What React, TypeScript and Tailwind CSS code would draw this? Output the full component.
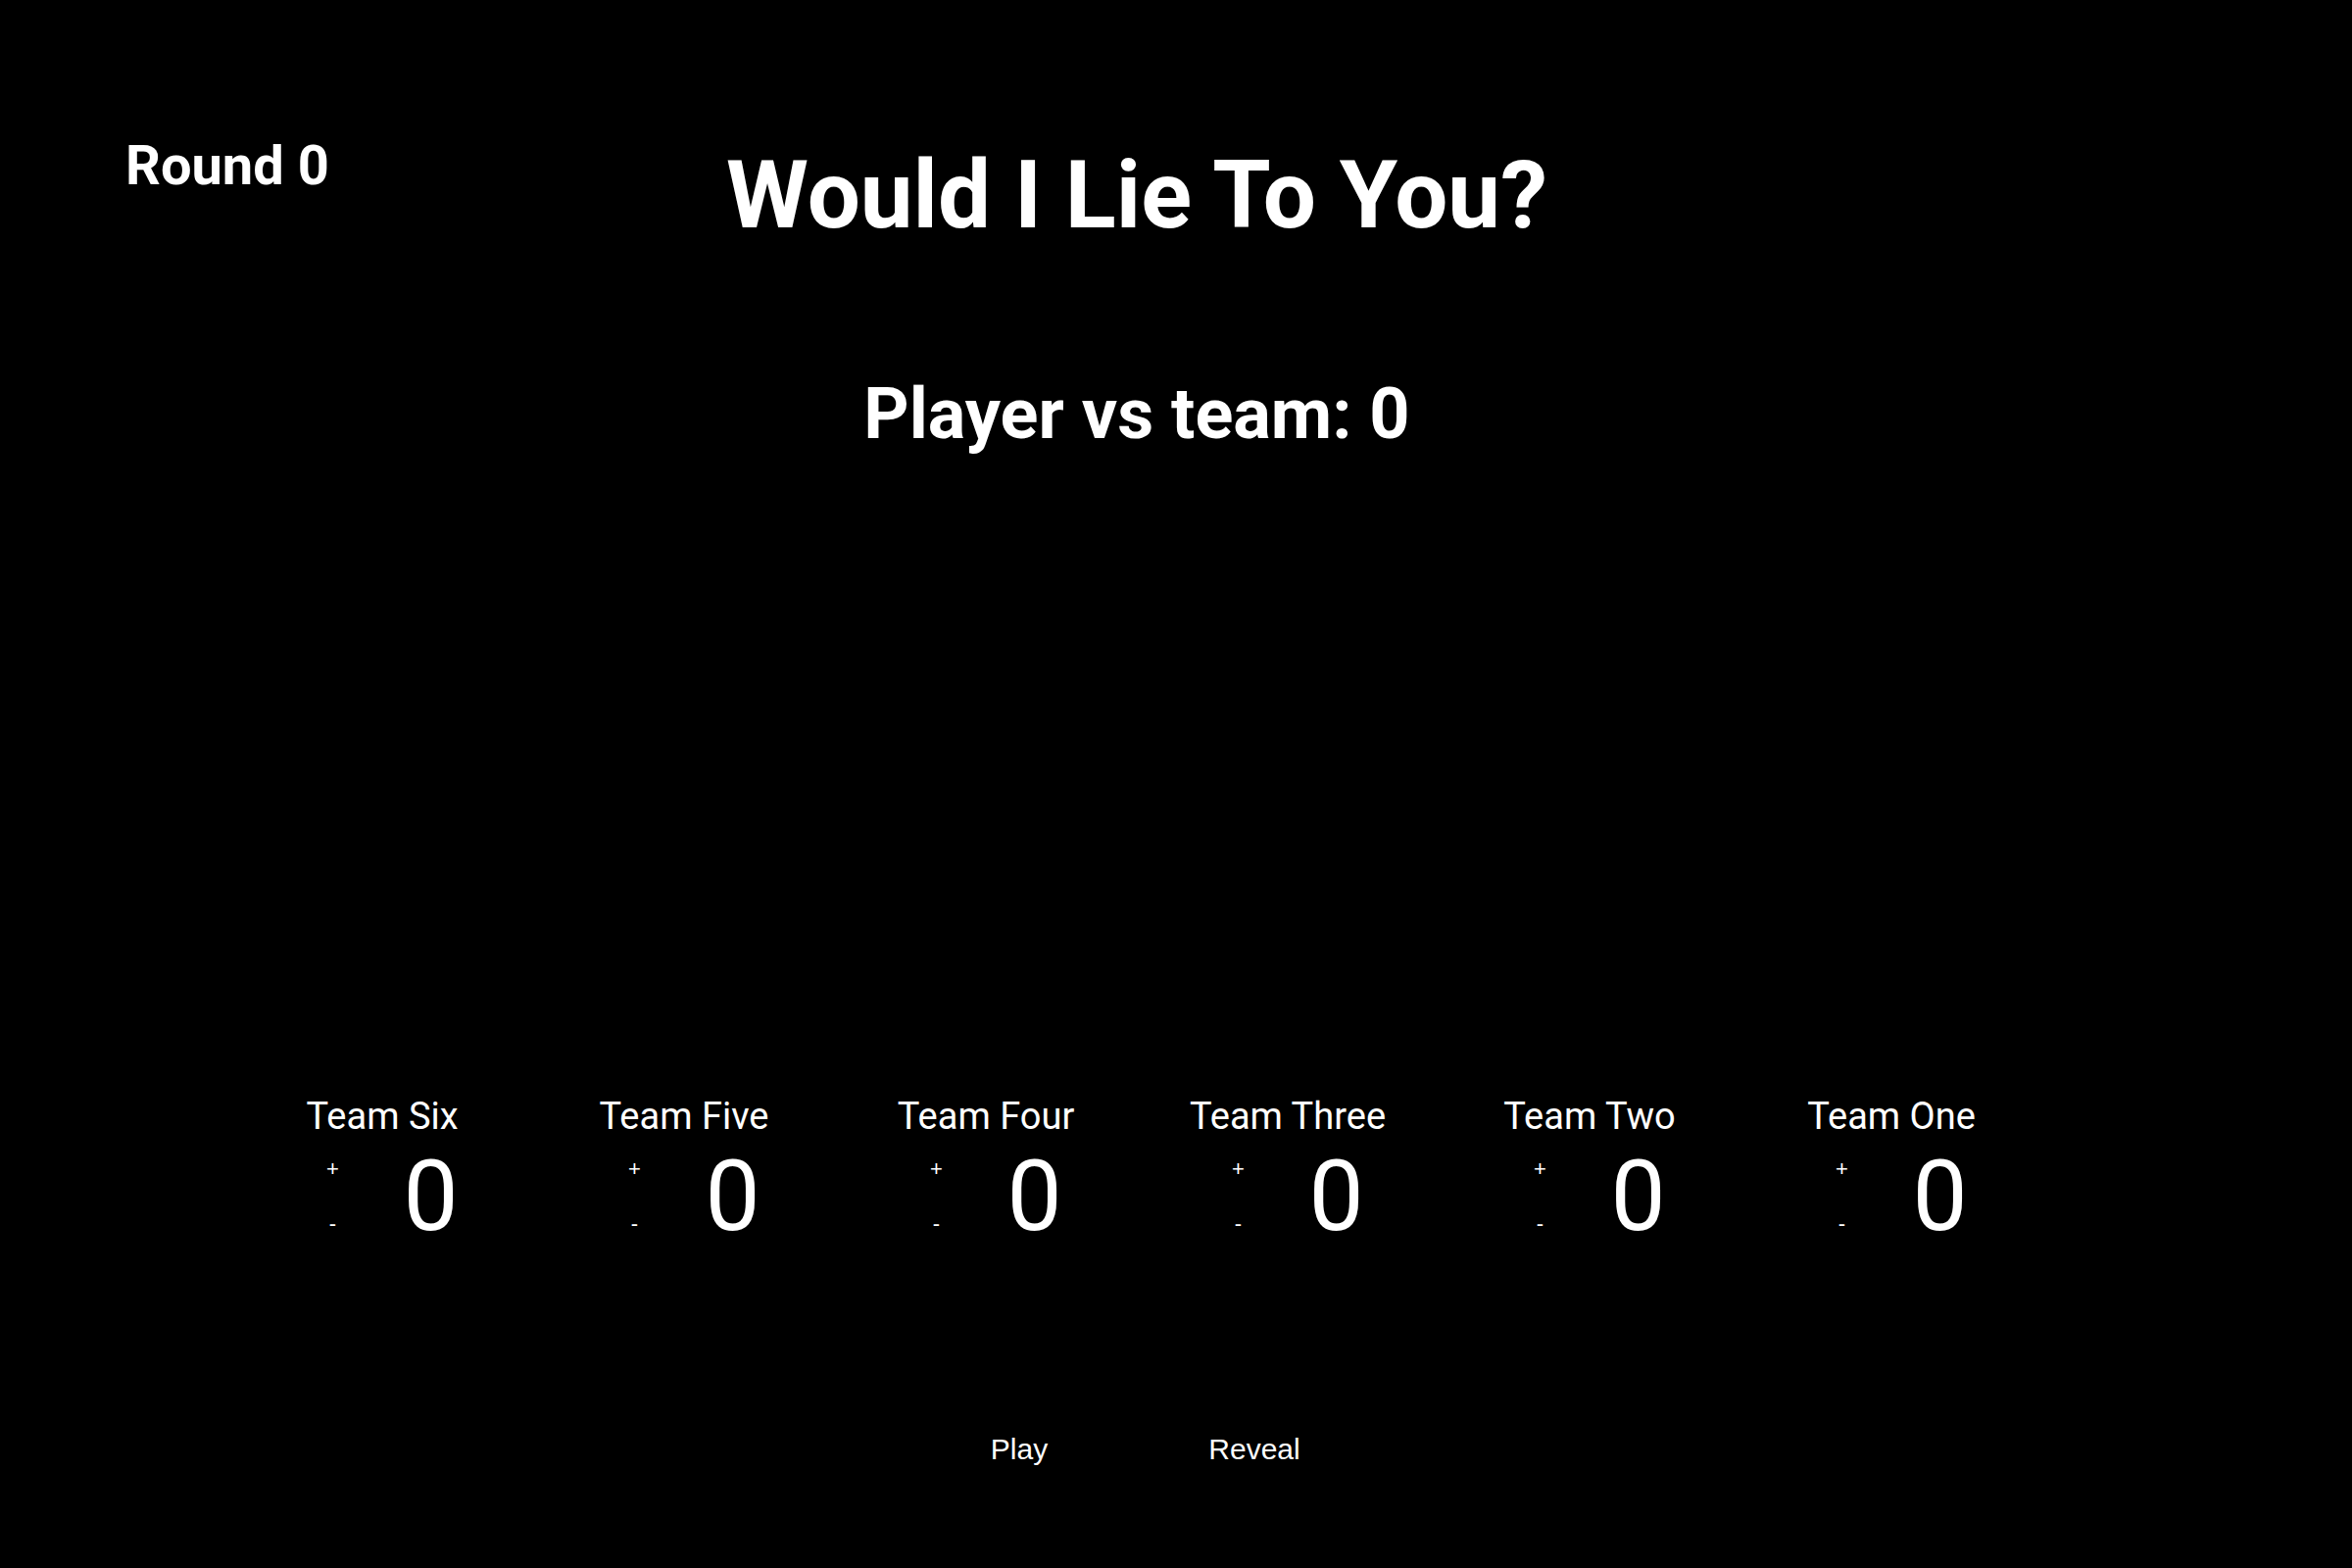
const teams = ["Team Six", "Team Five", "Team Four", "Team Three", "Team Two", "Team One"];

const TeamScore = ({ name }: { name: string }) => {
  return (
    <div className="w-[308px] flex flex-col items-center">
      <p className="text-[38px] leading-none">{name}</p>
      <div className="flex items-start mt-[13px] pl-[15px]">
        <div className="w-[24px] flex flex-col items-center pt-[11px] gap-[34px] font-[family-name:'Liberation_Sans',Arial,sans-serif] text-[22px] leading-none">
          <button className="leading-none">+</button>
          <button className="leading-none">-</button>
        </div>
        <p className="ml-[60px] text-[100px] leading-none">0</p>
      </div>
    </div>
  );
};

const App = () => {
  return (
    <div className="bg-black text-white h-[1600px] w-full font-[family-name:'Roboto',sans-serif]">
      <div className="w-[2320px] flex flex-col items-center">
        <div className="grid grid-cols-[1fr_auto_1fr] w-full pt-[141px]">
          <p className="pl-[128px] text-[56px] font-bold leading-none self-start">Round 0</p>
          <h1 className="mt-[10px] text-[96px] font-bold leading-none">Would I Lie To You?</h1>
          <div />
        </div>
        <h2 className="mt-[140px] text-[72px] font-bold leading-none">Player vs team: 0</h2>
        <div className="flex mt-[661px]">
          {teams.map((t) => (
            <TeamScore key={t} name={t} />
          ))}
        </div>
        <div className="flex gap-[120px] mt-[193px] font-[family-name:'Liberation_Sans',Arial,sans-serif] text-[30px] leading-none">
          <button className="w-[120px] leading-none">Play</button>
          <button className="w-[120px] leading-none">Reveal</button>
        </div>
      </div>
    </div>
  );
};

export default App;
